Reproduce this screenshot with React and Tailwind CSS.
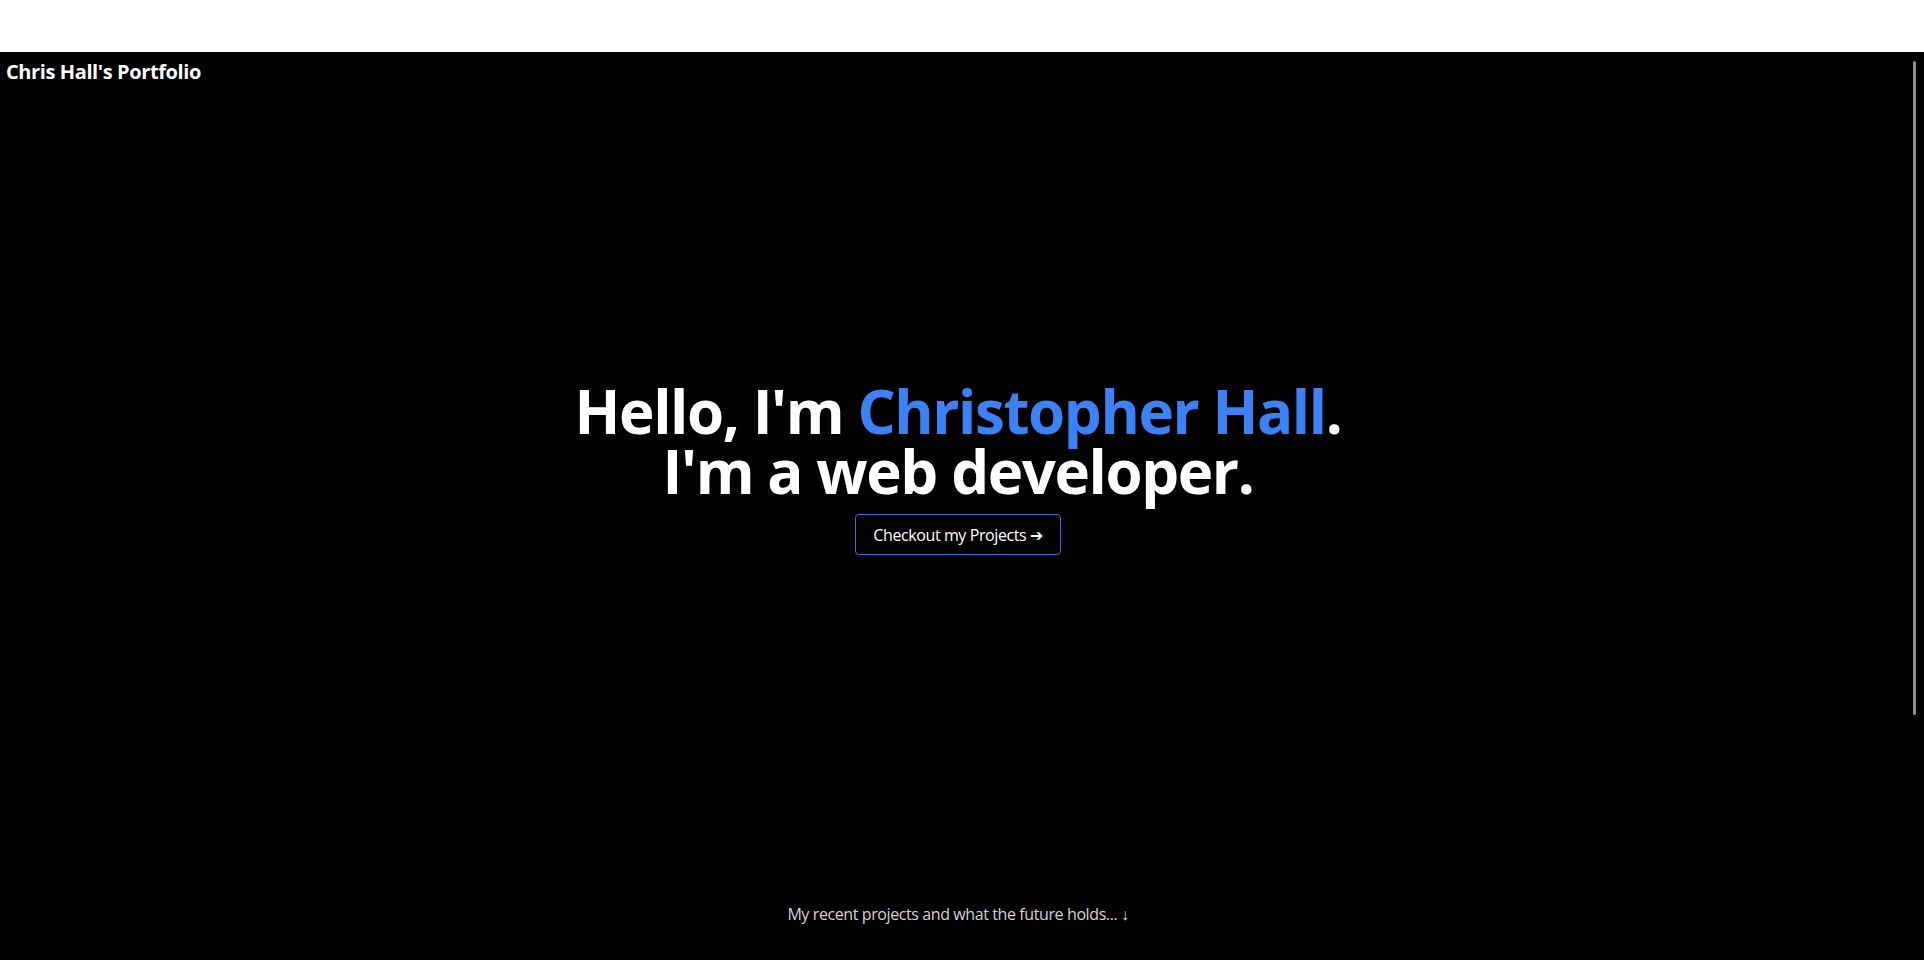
import React from "react";

// Landing hero for the portfolio
const App = () => {
  return (
    <div className="min-h-screen bg-white tracking-tight" style={{ fontFamily: "'Open Sans', 'Noto Sans', sans-serif" }}>
      {/* white strip above the hero */}
      <div className="h-[52px] bg-white" />

      <main className="relative flex h-[908px] flex-col bg-black pr-[8px] text-white">
        {/* overlay scrollbar thumb */}
        <div className="pointer-events-none absolute right-[8px] top-[9px] h-[654px] w-[3px] rounded-full bg-[#8c8c8c]" />

        <header className="px-[6px] pt-[6px]">
          <p className="text-xl font-bold leading-7">Chris Hall's Portfolio</p>
        </header>

        <section className="flex flex-col items-center pt-[295px]">
          <h1 className="text-center text-6xl font-bold leading-none tracking-[-1.4px]">
            Hello, I'm <span className="text-[#3b82f6]">Christopher Hall</span>.
            <br />
            I'm a web developer.
          </h1>
          <button className="mt-[13px] h-[41px] w-[206px] rounded border border-[#3b6fd8] bg-black text-base text-white">
            Checkout my Projects ➔
          </button>
        </section>

        <footer className="mt-auto pb-[34px] text-center">
          <p className="text-base leading-6 text-[#d4d4d4]">My recent projects and what the future holds... ↓</p>
        </footer>
      </main>
    </div>
  );
};

export default App;
